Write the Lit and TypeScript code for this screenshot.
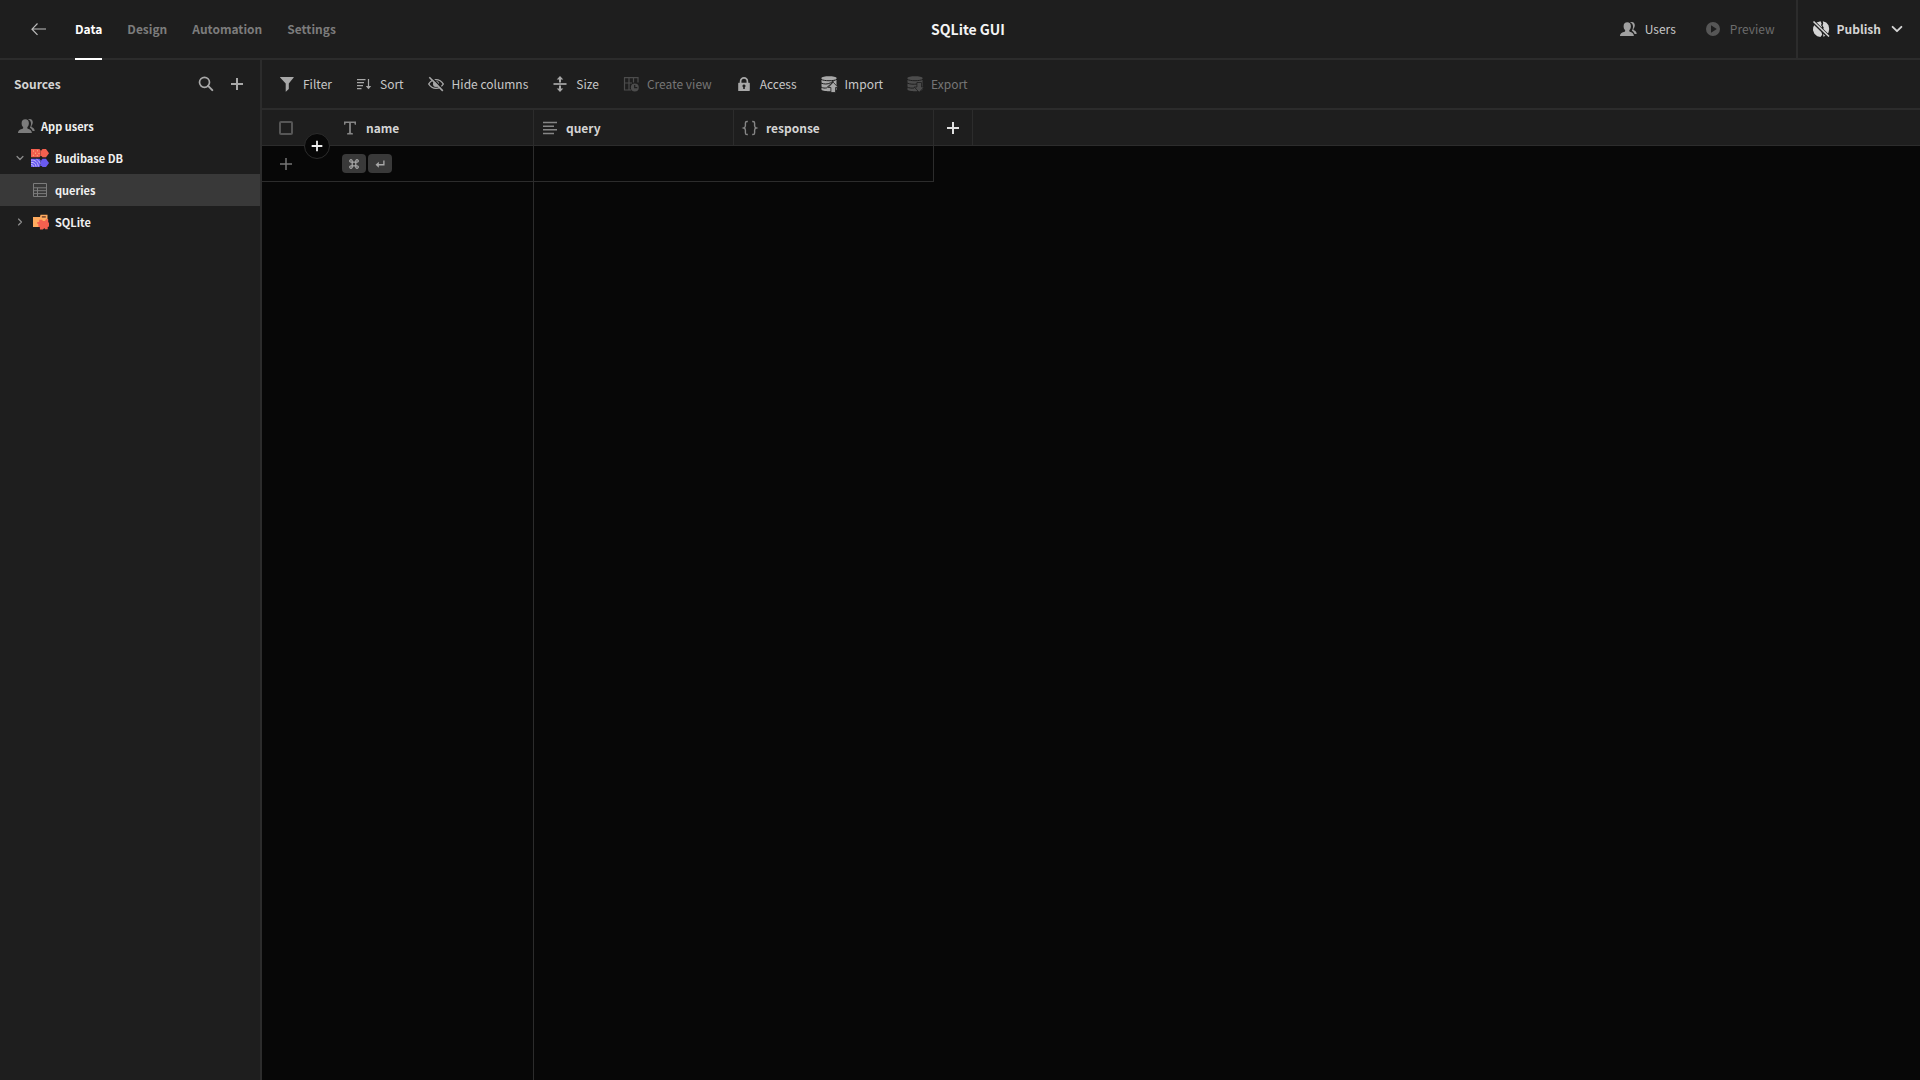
import { LitElement, html, css, svg, type TemplateResult } from "lit";
import { customElement, property } from "lit/decorators.js";
import { classMap } from "lit/directives/class-map.js";

/* Icons are drawn on an 18 x 18 grid and take the colour of their text. */
const ICONS: Record<string, TemplateResult> = {
  back: svg`<path d="M3 9h14M8.500 3.500 3 9.200l5.500 5.700" fill="none" stroke="currentColor" stroke-width="1.200"/>`,
  search: svg`<circle cx="7.500" cy="7.300" r="5" fill="none" stroke="currentColor" stroke-width="1.700"/><path d="m11.100 10.900 4.200 4.200" stroke="currentColor" stroke-width="2" stroke-linecap="round"/>`,
  plus: svg`<path d="M9 3v12M3 9h12" stroke="currentColor" stroke-width="2"/>`,
  plusThin: svg`<path d="M9 3v12M3 9h12" stroke="currentColor" stroke-width="1.500"/>`,
  users: svg`<path d="M10.900 2.600c.5-.5 1.200-.7 2-.7 1.800 0 2.900 1.400 2.900 3.400 0 1.300-.5 2.500-1.200 3.400-.3.400-.2 1.300.4 1.500 1.300.5 2.600 1.600 2.700 3.800h-2.100c-.5-1.700-1.600-2.700-2.800-3.300.9-1.300 1.300-2.700 1.200-4.400-.1-1.900-1-3.200-3.100-3.700z"/><path d="M8.300 2.300c2.200 0 3.600 1.600 3.600 3.900 0 1.500-.6 2.900-1.400 3.900-.4.500-.3 1.500.4 1.700 1.800.5 3.900 1.500 4 4.200H1c.1-2.700 2.600-3.700 4.600-4.200.6-.2.8-1.200.4-1.700-.9-1-1.400-2.400-1.400-3.900 0-2.300 1.400-3.900 3.700-3.900z"/>`,
  play: svg`<path fill-rule="evenodd" d="M9 2a7 7 0 1 0 0 14A7 7 0 0 0 9 2zM7 5.300 12.800 9 7 12.700z"/>`,
  globeOff: svg`<path d="M4.500 2.500 8.600 1.200 9.600 3.600 9 5.300 10 6.600 9.300 8.600 10.300 10.200 9.600 12.600 10.200 14.800 8.400 17 5.300 16.200 2.400 13.800 1 10.200 1.200 7.200 2.500 4.700z"/><path d="M10.800 1.200 14.200 2.400 16.500 5.300 17.200 9 16.500 12.500 14 15.500 11.300 16.800 11.300 13.800 12.200 11.500 11.200 9.600 11.700 7.500 10.500 5.500 11.200 3.600z"/><path d="m.8 1.200 16.400 16" stroke="#1e1e1e" stroke-width="3.600"/><path d="m1.500 1.500 15.500 15" stroke="currentColor" stroke-width="1.600"/>`,
  chevron: svg`<path d="m4.600 6.800 4.400 4.400 4.400-4.400" fill="none" stroke="currentColor" stroke-width="1.900" stroke-linecap="round" stroke-linejoin="round"/>`,
  chevronRight: svg`<path d="m6.800 4.600 4.400 4.400-4.400 4.400" fill="none" stroke="currentColor" stroke-width="1.900" stroke-linecap="round" stroke-linejoin="round"/>`,
  filter: svg`<path d="M2.300 2h13.200c.3 0 .4.300.2.600L10.800 8.500v5.600l-2.700 2.500c-.2.200-.4.100-.4-.2V8.500L2.100 2.600C1.900 2.300 2 2 2.300 2z"/>`,
  sort: svg`<path d="M2 4.700h8.500M2 7.700h7M2 10.700h6M2 13.700h4.500" stroke="currentColor" stroke-width="1.300"/><path d="M13.500 4v8.500" stroke="currentColor" stroke-width="1.200"/><path d="m10.800 11 2.700 3.300 2.700-3.300z"/>`,
  hide: svg`<path d="M1.700 9C3.400 6.200 6 4.600 9 4.600s5.600 1.600 7.300 4.400c-1.700 2.800-4.300 4.400-7.300 4.400S3.400 11.800 1.700 9z" fill="none" stroke="currentColor" stroke-width="1.400"/><circle cx="9" cy="9" r="3"/><path d="m3.500 1.300 13.600 14" stroke="#1e1e1e" stroke-width="1.500"/><path d="m2.300 2.200 13.500 13.700" stroke="currentColor" stroke-width="1.600"/>`,
  size: svg`<path d="M2.500 9h13" stroke="currentColor" stroke-width="1.700"/><path d="M9 .9 12.300 4.600H10v3H8v-3H5.700zM9 17.100l3.300-3.700H10v-3H8v3H5.700z"/>`,
  createView: svg`<path d="M2 2.600h14v5M9 15H2.500V2.600M7 2.600V15M11.500 2.600v5M2 8h8M2 2.600h14" fill="none" stroke="currentColor" stroke-width="1.200"/><path fill-rule="evenodd" d="M12.800 8.500a4 4 0 1 0 0 8 4 4 0 0 0 0-8zM12.100 10h1.200v2.100h2v1.100h-3.200z"/>`,
  lock: svg`<path d="M5.600 8V6.300a3.400 3.400 0 0 1 6.800 0V8" fill="none" stroke="currentColor" stroke-width="1.700"/><path fill-rule="evenodd" d="M3.700 7.700h10.600c.3 0 .5.200.5.500v7.300c0 .3-.2.500-.5.500H3.700a.5.500 0 0 1-.5-.5V8.200c0-.3.200-.5.500-.5zM9 9.400a1.500 1.500 0 0 0-.8 2.800v1.900h1.600v-1.900A1.500 1.500 0 0 0 9 9.400z"/>`,
  dataUp: svg`<path d="M1.500 3c0-2.300 15-2.300 15 0v11.500c0 2.300-15 2.300-15 0z"/><path d="M1 4.300c3 1.900 13 1.900 16 0M1 8c3 1.300 6.500 1.500 9.500-.2L14.500 5.500M1 12c2 1.300 4 1.200 5.500.9L13 7" fill="none" stroke="#1e1e1e" stroke-width="1"/><path d="M13.200 7.200 18.200 12.500h-2.700v5h-4.600v-5H8.200z" stroke="#1e1e1e" stroke-width=".8"/>`,
  dataDown: svg`<path d="M1.500 3c0-2.300 15-2.300 15 0v11.500c0 2.300-15 2.300-15 0z"/><path d="M1 4.300c3 1.900 13 1.900 16 0M1 8c3 1.300 6.500 1.500 10 1M1 12c2 1.100 4.500 1.300 7 1" fill="none" stroke="#1e1e1e" stroke-width="1"/><path d="M10.900 7.500h4.600v4.500h2.700l-5 5.300-5-5.300h2.700z" stroke="#1e1e1e" stroke-width=".8"/>`,
  text: svg`<path d="M3 2.500h12v3.300h-1.200l-.5-1.700H9.900v9.700l2 .4v1.300H6.100v-1.300l2-.4V4.100H4.700l-.5 1.700H3z"/>`,
  longform: svg`<path d="M2 3.500h14M2 7.200h11M2 10.800h14M2 14.500h11" stroke="currentColor" stroke-width="1.500"/>`,
  json: svg`<path d="M6.800 2.500H6c-1.200 0-1.600.6-1.600 1.600v2.700c0 1.100-.4 1.800-1.600 2.200 1.200.4 1.600 1.100 1.600 2.200v2.700c0 1 .4 1.600 1.600 1.600h.8M11.200 2.500h.8c1.200 0 1.600.6 1.600 1.600v2.700c0 1.100.4 1.800 1.600 2.200-1.200.4-1.600 1.100-1.600 2.200v2.700c0 1-.4 1.600-1.600 1.600h-.8" fill="none" stroke="currentColor" stroke-width="1.400"/>`,
  table: svg`<path d="M2.500 2.500h13v13h-13zM2.500 6.800h13M2.500 9.700h13M2.500 12.600h13M6.500 6.800v8.700" fill="none" stroke="currentColor" stroke-width="1"/>`,
  command: svg`<path d="M6.700 6.700h4.600v4.600H6.700zM6.700 6.700H5.200A1.600 1.600 0 1 1 6.700 5.200zM11.300 6.700V5.200a1.600 1.600 0 1 1 1.500 1.500zM11.300 11.300h1.500a1.600 1.600 0 1 1-1.500 1.500zM6.700 11.300v1.500a1.600 1.600 0 1 1-1.500-1.500z" fill="none" stroke="currentColor" stroke-width="1.600"/>`,
  enter: svg`<path d="M14 4.500V10H6" fill="none" stroke="currentColor" stroke-width="1.700"/><path d="M7.500 6.200v7.600L3.300 10z"/>`,
  budibase: svg`
    <path d="M0 0h8.500l1.200 1.800v4.700L8.500 8.300H0z" fill="#f4604f"/>
    <path d="M10 1.700 11.500 0H15l3 4.200-3 4.100h-3.500L10 6.600z" fill="#f4604f"/>
    <path d="M2 2h1M6 1.800h1M4 4.200h1M7.500 4.600h1M1.800 6.300h1M5.800 6.700h1" stroke="#ffc08a" stroke-width="1"/>
    <path d="M0 9.700h8.500l1.200 1.800v4.700L8.500 18H0z" fill="#6a5af0"/>
    <path d="M10 11.400 11.500 9.700H15l3 4.200-3 4.100h-3.500L10 16.300z" fill="#6a5af0"/>
    <path d="M0 11.200c4-.6 7 2 7.400 6.300M0 13.400c3-.3 4.800 1.400 5.100 4.300M0 15.600c1.500-.1 2.600.7 2.800 2.200M5.500 10.300c1.800.9 3 2.300 3.700 4.200" fill="none" stroke="#c4bdfb" stroke-width="1"/>`,
  sqlite: svg`
    <path d="M2 4h7L9.500 1.800h7V6H17v8H2z" fill="#ffab5e"/>
    <path d="M10.800 3.200h4v1.400h-4z" fill="#6b3a28"/>
    <path d="M8.200 6.800h3l.6 1.200h2.300l.8-1.800h2.300V9l.8 1v3.500l-1.300.6v2.200h-2.600l-.7-1.300-1.500 1.500H8.900v-2.200l-1.600-.9v-2.300l-1.200-.7V9.200l2.100-.4z" fill="#f4604f"/>`,
};

@customElement("ui-icon")
export class UiIcon extends LitElement {
  @property() name = "plus";

  static styles = css`
    :host {
      display: block;
      flex: none;
      width: 18px;
      height: 18px;
    }
    .glyph {
      display: block;
      width: 100%;
      height: 100%;
      fill: currentColor;
    }
  `;

  render() {
    return html`<svg class="glyph" viewBox="0 0 18 18" aria-hidden="true">${ICONS[this.name]}</svg>`;
  }
}

const sharedStyles = css`
  button,
  a {
    display: flex;
    align-items: center;
    margin: 0;
    padding: 0;
    border: 0;
    background: none;
    color: inherit;
    font: inherit;
    text-decoration: none;
    white-space: nowrap;
  }
  button:enabled {
    cursor: pointer;
  }
`;

@customElement("top-bar")
export class TopBar extends LitElement {
  static styles = [
    sharedStyles,
    css`
      :host {
        display: grid;
        grid-template-columns: 1fr auto 1fr;
        height: 58px;
        padding-left: 16px;
        border-bottom: 2px solid #2c2c2c;
      }
      .left,
      .tabs,
      .right,
      .actions {
        display: flex;
        align-items: stretch;
      }
      .left {
        gap: 28px;
        padding-left: 13px;
      }
      .tabs {
        gap: 25px;
        color: #7c7c7c;
        font-weight: 600;
      }
      .tab {
        margin-bottom: -2px;
        border-bottom: 2px solid transparent;
      }
      .tab.current {
        border-color: #fff;
        color: #fff;
      }
      .back {
        color: #bdbdbd;
      }
      .title {
        align-self: center;
        margin: 0;
        color: #f4f4f4;
        font-size: 14px;
        font-weight: 700;
      }
      .right {
        justify-content: flex-end;
      }
      .actions {
        gap: 28px;
        padding-right: 21px;
      }
      .action {
        gap: 8px;
      }
      .action ui-icon {
        color: #a0a0a0;
      }
      .action:disabled {
        color: #6c6c6c;
      }
      .action:disabled ui-icon {
        color: #565656;
      }
      .publish {
        gap: 7px;
        padding: 0 14px;
        border-left: 2px solid #2c2c2c;
        color: #d4d4d4;
        font-weight: 600;
      }
    `,
  ];

  render() {
    const tabs = ["Data", "Design", "Automation", "Settings"];
    return html`
      <div class="left">
        <button class="back" aria-label="Back"><ui-icon name="back"></ui-icon></button>
        <nav class="tabs">
          ${tabs.map(
            (tab, i) => html`<a class=${classMap({ tab: true, current: i === 0 })} href="#${tab.toLowerCase()}">${tab}</a>`
          )}
        </nav>
      </div>
      <h1 class="title">SQLite GUI</h1>
      <div class="right">
        <div class="actions">
          <button class="action"><ui-icon name="users"></ui-icon>Users</button>
          <button class="action" disabled><ui-icon name="play"></ui-icon>Preview</button>
        </div>
        <button class="publish">
          <ui-icon name="globeOff"></ui-icon>Publish<ui-icon name="chevron"></ui-icon>
        </button>
      </div>
    `;
  }
}

@customElement("source-panel")
export class SourcePanel extends LitElement {
  static styles = [
    sharedStyles,
    css`
      :host {
        display: block;
        border-right: 2px solid #2c2c2c;
      }
      .heading {
        display: flex;
        align-items: center;
        gap: 13px;
        height: 48px;
        padding: 0 14px 2px;
      }
      .label {
        flex: 1;
        margin: 0;
        font-size: 12px;
        font-weight: 600;
        color: #d4d4d4;
      }
      .tool {
        color: #a8a8a8;
      }
      .list {
        margin: 0;
        padding: 0;
        list-style: none;
        color: #f0f0f0;
        font-size: 11px;
        font-weight: 700;
      }
      .item {
        box-sizing: border-box;
        width: 100%;
        height: 32px;
        padding-left: 14px;
      }
      .item.plain {
        padding-left: 17px;
      }
      .item.selected {
        background: #393939;
      }
      .toggle {
        width: 12px;
        height: 12px;
        margin-right: 5px;
        color: #8c8c8c;
      }
      .logo {
        margin-right: 6px;
        color: #7c7c7c;
      }
    `,
  ];

  render() {
    return html`
      <div class="heading">
        <h2 class="label">Sources</h2>
        <button class="tool" aria-label="Search"><ui-icon name="search"></ui-icon></button>
        <button class="tool" aria-label="Add source"><ui-icon name="plus"></ui-icon></button>
      </div>
      <ul class="list">
        <li>
          <a class="item plain" href="#users"><ui-icon class="logo" name="users"></ui-icon>App users</a>
        </li>
        <li>
          <a class="item" href="#budibase">
            <ui-icon class="toggle" name="chevron"></ui-icon><ui-icon class="logo" name="budibase"></ui-icon>Budibase DB
          </a>
        </li>
        <li>
          <a class="item selected" href="#queries">
            <span class="toggle"></span><ui-icon class="logo" name="table"></ui-icon>queries
          </a>
        </li>
        <li>
          <a class="item" href="#sqlite">
            <ui-icon class="toggle" name="chevronRight"></ui-icon><ui-icon class="logo" name="sqlite"></ui-icon>SQLite
          </a>
        </li>
      </ul>
    `;
  }
}

@customElement("data-grid")
export class DataGrid extends LitElement {
  static styles = [
    sharedStyles,
    css`
      :host {
        display: flex;
        flex-direction: column;
        min-width: 0;
        background: #070707;
      }
      .toolbar {
        display: flex;
        gap: 23px;
        height: 48px;
        padding: 0 16px;
        border-bottom: 2px solid #2c2c2c;
        background: #1e1e1e;
      }
      .tool {
        gap: 7px;
      }
      .tool ui-icon {
        color: #a8a8a8;
      }
      .tool:disabled {
        color: #757575;
      }
      .tool:disabled ui-icon {
        color: #4c4c4c;
      }
      .sheet {
        position: relative;
      }
      .grid {
        width: 100%;
        border-spacing: 0;
        table-layout: fixed;
      }
      .gutter {
        width: 72px;
      }
      .column {
        width: 200px;
      }
      .add {
        width: 39px;
      }
      th,
      td {
        box-sizing: border-box;
        height: 36px;
        padding: 0;
        border-bottom: 1px solid #2c2c2c;
        text-align: left;
      }
      th {
        background: #1e1e1e;
        color: #d4d4d4;
        font-weight: 600;
      }
      .edge {
        border-right: 1px solid #2c2c2c;
      }
      .open {
        border-bottom: 0;
      }
      .cell {
        display: flex;
        align-items: center;
        gap: 7px;
        padding-left: 7px;
      }
      .cell ui-icon {
        color: #868686;
      }
      .pick {
        display: block;
        box-sizing: border-box;
        width: 14px;
        height: 14px;
        margin: 0 0 0 17px;
        appearance: none;
        border: 2px solid #565656;
        border-radius: 2px;
      }
      .add-column {
        margin: auto;
        color: #e0e0e0;
      }
      .add-row {
        margin-left: 15px;
        color: #757575;
      }
      .keys {
        display: flex;
        gap: 2px;
        padding-left: 8px;
      }
      .key {
        display: flex;
        align-items: center;
        justify-content: center;
        width: 24px;
        height: 19px;
        border-radius: 4px;
        background: #393939;
        color: #a8a8a8;
      }
      .key ui-icon {
        width: 14px;
        height: 14px;
      }
      .insert {
        position: absolute;
        top: 23px;
        left: 42px;
        box-sizing: border-box;
        justify-content: center;
        width: 26px;
        height: 26px;
        border: 1px solid #2c2c2c;
        border-radius: 50%;
        background: #070707;
        color: #f0f0f0;
      }
      .insert ui-icon {
        width: 16px;
        height: 16px;
      }
      .rest {
        flex: 1;
        box-sizing: border-box;
        width: 272px;
        border-right: 1px solid #2c2c2c;
      }
    `,
  ];

  render() {
    const tools: [string, string, boolean?][] = [
      ["filter", "Filter"],
      ["sort", "Sort"],
      ["hide", "Hide columns"],
      ["size", "Size"],
      ["createView", "Create view", true],
      ["lock", "Access"],
      ["dataUp", "Import"],
      ["dataDown", "Export", true],
    ];
    const columns = [
      ["text", "name"],
      ["longform", "query"],
      ["json", "response"],
    ];
    return html`
      <div class="toolbar">
        ${tools.map(
          ([icon, label, off]) =>
            html`<button class="tool" ?disabled=${off}><ui-icon name=${icon}></ui-icon>${label}</button>`
        )}
      </div>
      <div class="sheet">
        <table class="grid">
          <colgroup>
            <col class="gutter" />
            ${columns.map(() => html`<col class="column" />`)}
            <col class="add" />
            <col />
          </colgroup>
          <thead>
            <tr>
              <th><input class="pick" type="checkbox" aria-label="Select all rows" /></th>
              ${columns.map(
                ([icon, label]) =>
                  html`<th class="edge"><div class="cell"><ui-icon name=${icon}></ui-icon>${label}</div></th>`
              )}
              <th class="edge">
                <button class="add-column" aria-label="Add column"><ui-icon name="plus"></ui-icon></button>
              </th>
              <th></th>
            </tr>
          </thead>
          <tbody>
            <tr>
              <td>
                <button class="add-row" aria-label="Add row"><ui-icon name="plusThin"></ui-icon></button>
              </td>
              <td class="edge">
                <div class="keys">
                  <span class="key"><ui-icon name="command"></ui-icon></span>
                  <span class="key"><ui-icon name="enter"></ui-icon></span>
                </div>
              </td>
              <td></td>
              <td class="edge"></td>
              <td class="open"></td>
              <td class="open"></td>
            </tr>
          </tbody>
        </table>
        <button class="insert" aria-label="Insert row"><ui-icon name="plus"></ui-icon></button>
      </div>
      <div class="rest"></div>
    `;
  }
}

@customElement("app-root")
export class AppRoot extends LitElement {
  static styles = css`
    :host {
      display: flex;
      flex-direction: column;
      min-height: 100vh;
      background: #1e1e1e;
      color: #c8c8c8;
      font: 12px/18px "Noto Sans CJK SC", "Noto Sans", sans-serif;
    }
    .body {
      display: grid;
      flex: 1;
      grid-template-columns: 262px 1fr;
    }
  `;

  render() {
    return html`
      <top-bar></top-bar>
      <div class="body">
        <source-panel></source-panel>
        <data-grid></data-grid>
      </div>
    `;
  }
}
